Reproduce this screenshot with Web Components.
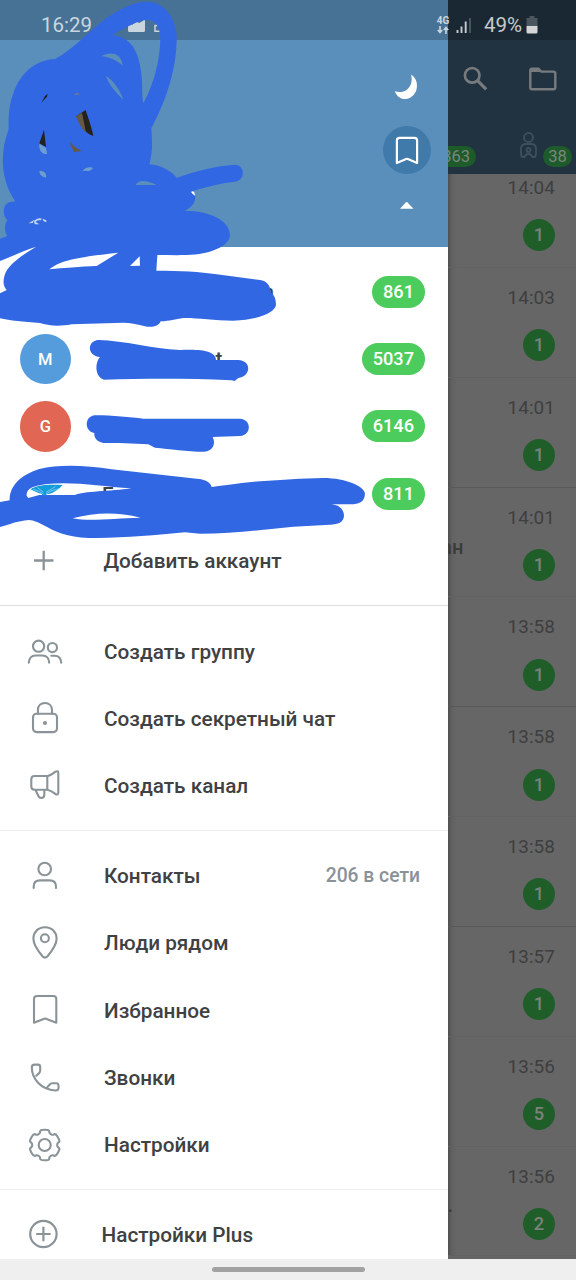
<!DOCTYPE html>
<html lang="ru">
<head>
<meta charset="utf-8">
<title>Меню</title>
<style>
html,body{margin:0;padding:0;width:576px;height:1280px;overflow:hidden;background:#efefef}
body{font-family:Roboto,"Liberation Sans",sans-serif}
</style>
</head>
<body>
<messenger-app></messenger-app>
<script>
function define(name, html) {
  customElements.define(name, class extends HTMLElement {
    constructor() {
      super();
      const t = document.createElement('template');
      t.innerHTML = typeof html === 'function' ? html(this) : html;
      this.attachShadow({ mode: 'open' }).append(t.content.cloneNode(true));
    }
  });
}

function gearPath(cx, cy) {
  const pts = [];
  for (let k = 0; k < 6; k++) {
    const a = -90 + 60 * k;
    for (const [r, d] of [[12.6, -22], [15.9, -16], [15.9, 16], [12.6, 22]]) {
      const t = (a + d) * Math.PI / 180;
      pts.push([cx + r * Math.cos(t), cy + r * Math.sin(t)]);
    }
  }
  const f = n => n.toFixed(2);
  const mix = (p, q, m) => [p[0] + (q[0] - p[0]) * m, p[1] + (q[1] - p[1]) * m];
  let d = '';
  pts.forEach((p, i) => {
    const prev = pts[(i + pts.length - 1) % pts.length], next = pts[(i + 1) % pts.length];
    const a = mix(p, prev, .42), b = mix(p, next, .42);
    d += (i ? 'L' : 'M') + f(a[0]) + ' ' + f(a[1]) + 'Q' + f(p[0]) + ' ' + f(p[1]) + ' ' + f(b[0]) + ' ' + f(b[1]);
  });
  return d + 'Z';
}

const ICONS = {
  add: '<path stroke-width="2.3" stroke-linecap="butt" d="M9 19.5H28.5M18.7 9.8V29.3"/>',
  group: '<circle cx="13.6" cy="14.2" r="5.6"/><circle cx="27.4" cy="15.6" r="4.6"/><path d="M3.8 30.6C4 26.5 6.5 23.500 10.500 23.500H17.500C21.500 23.500 24 26.500 24.200 30.600M26.300 23.700H29.500C33.700 23.700 36 26.700 36.200 30.600"/>',
  lock: '<rect x="8" y="14.700" width="24" height="18.400" rx="3.500"/><path d="M12.900 14.700V11.200C12.900 6.600 16 4 20 4S27 6.600 27 11.200V14.700"/><circle cx="20" cy="24" r="2.100" fill="#8a9398" stroke="none"/>',
  horn: '<path d="M22.300 10H9.500Q6.300 10 6.300 13.200V20.500Q6.300 23.700 9.500 23.700H22.300ZM22.300 10C25.500 9.500 28 7.500 30.300 5.700Q33.300 4.200 33.300 7V26.500Q33.300 29.500 30.300 28C28 26.300 25.500 24.200 22.300 23.700M10.500 24L13.500 30.200C14.700 32.800 19.300 32.500 19.300 29V24"/>',
  user: '<circle cx="19.700" cy="13" r="6.300"/><path d="M8.700 32V30.500C8.700 26.500 11 24.400 15 24.400H24.500C28.500 24.400 31 26.500 31 30.500V32"/>',
  pin: '<path d="M20 4.200C13 4.200 8.400 9.200 8.400 15.800C8.400 21.500 13.500 28.500 17.500 33.200Q20 36 22.500 33.200C26.500 28.500 31.600 21.500 31.600 15.800C31.600 9.200 27 4.200 20 4.200Z"/><circle cx="19.900" cy="15.200" r="4"/>',
  bookmark: '<path d="M9 31.700V8Q9 5 12 5H28.300Q31.300 5 31.300 8V31.700L21 27.700Q20.100 27.400 19.300 27.700Z"/>',
  phone: '<path d="M6.800 9.500Q6.800 6.600 9.500 6.600H13Q15.200 6.600 15.200 9V12.500Q15.200 14 14 15.200L11.300 17.800M22.500 29L24.500 26.800Q25.700 25.400 27.500 25.300L31.500 25.300Q33.500 25.400 33.500 27.500V30Q33.500 32.600 30.500 32.500C16 31.500 7 21 6.800 9.500"/>',
  gear: '<path d="' + gearPath(19.700, 20) + '"/><circle cx="19.700" cy="20" r="6"/>',
  plus: '<g stroke-width="2.2"><circle cx="18.400" cy="19" r="13.200"/><path stroke-linecap="butt" d="M11.200 19H25.600M18.400 11.800V26.200"/></g>'
};

define('menu-item', el => `
<style>
:host{display:flex;align-items:center;height:67.200px;box-sizing:border-box;padding:1.500px 28px 0 25px;color:#404142;font-size:20.750px;font-weight:500;line-height:24px;white-space:nowrap}
svg{width:40px;height:40px;flex:none;margin-right:var(--gap,39px);fill:none;stroke:#8a9398;stroke-width:2.100;stroke-linecap:round;stroke-linejoin:round}
.label{flex:1}
.note{color:#8a9297;font-size:19.300px}
</style>
<svg viewBox="0 0 40 40">${ICONS[el.getAttribute('icon')]}</svg><span class="label"><slot></slot></span><span class="note"><slot name="note"></slot></span>`);

define('count-badge', `
<style>
:host{display:flex;align-items:center;justify-content:center;box-sizing:border-box;flex:none;min-width:32px;height:32px;border-radius:16px;padding:0 10.500px;background:#4ccc5c;color:#fff;font-size:18.200px;font-weight:500;line-height:32px}
</style><slot></slot>`);

define('account-row', el => `
<style>
:host{display:flex;align-items:center;height:67.200px;box-sizing:border-box;padding:0 23.500px 0 20px}
.avatar{display:flex;align-items:center;justify-content:center;width:50.500px;height:50.500px;border-radius:50%;flex:none;background:${el.getAttribute('color') || '#fff'};color:#fff;font-size:16.500px;font-weight:500}
.name{flex:1;padding-left:var(--name-x,31.500px);padding-top:var(--name-y,0);font-size:20.600px;font-weight:500;color:#404142}
</style>
<span class="avatar">${el.getAttribute('letter') || ''}</span><span class="name"><slot></slot></span><count-badge>${el.getAttribute('count')}</count-badge>`);

define('menu-divider', `
<style>:host{display:flex;align-items:center;height:23px}i{flex:1;height:1px;background:var(--line,#ececec)}</style><i></i>`);

define('drawer-header', `
<style>
:host{display:flex;flex-direction:column;align-items:flex-end;box-sizing:border-box;height:247px;padding:63px 17px 0 0;background:#5a8fbb}
svg{display:block;width:48px;height:48px}
.saved{margin-top:15px;border-radius:50%;background:#407aaa}
.arrow{margin-top:7px}
</style>
<svg viewBox="-1.500 -.5 48 48"><path fill="#fff" d="M26.500 11.300C31.500 13.800 33.500 20 32 26C30.200 32.500 24.500 36 19 35.500C14.800 35 11.800 31.800 10.300 27.800C15 29.300 19.700 28.800 23.200 25.500C27 21.800 28 16.500 26.500 11.300Z"/></svg>
<svg class="saved" viewBox="0 0 48 48"><path fill="none" stroke="#fff" stroke-width="2.200" stroke-linejoin="round" d="M13.900 37V14.500Q13.900 11.900 16.500 11.900H31.500Q34.100 11.900 34.100 14.500V37L24.900 33Q24 32.600 23.100 33Z"/></svg>
<svg class="arrow" viewBox="0 0 48 48"><path fill="#fff" d="M17 27.800L22.700 21.400Q23.600 20.600 24.500 21.400L30.500 27.800Z"/></svg>`);

define('side-drawer', `
<style>
:host{display:flex;flex-direction:column;width:448px;height:1259px;background:#fff;overflow:hidden;flex:none}
drawer-header,menu-divider,menu-item,account-row{flex:none}
.accounts{padding-top:11.400px}
.tight{--gap:38.500px}
</style>
<drawer-header></drawer-header>
<div class="accounts">
<account-row count="861" style="--name-x:192px">n</account-row>
<account-row count="5037" letter="M" color="#549cdc" style="--name-x:145px">t</account-row>
<account-row count="6146" letter="G" color="#e16653"></account-row>
<account-row count="811" style="--name-y:3px">E</account-row>
<menu-item icon="add" class="tight">Добавить аккаунт</menu-item>
</div>
<menu-divider style="--line:#dedede"></menu-divider>
<menu-item icon="group">Создать группу</menu-item>
<menu-item icon="lock">Создать секретный чат</menu-item>
<menu-item icon="horn">Создать канал</menu-item>
<menu-divider></menu-divider>
<menu-item icon="user">Контакты<span slot="note">206 в сети</span></menu-item>
<menu-item icon="pin">Люди рядом</menu-item>
<menu-item icon="bookmark">Избранное</menu-item>
<menu-item icon="phone">Звонки</menu-item>
<menu-item icon="gear">Настройки</menu-item>
<menu-divider></menu-divider>
<menu-item icon="plus" style="--gap:36.500px">Настройки Plus</menu-item>`);

define('chat-row', el => `
<style>
:host{display:flex;flex-direction:column;align-items:stretch;gap:19.300px;height:109.850px;box-sizing:border-box;flex:none;padding:18px 21px 0 0;border-bottom:1px solid var(--line,#616161)}
.time{align-self:flex-end;font-size:18.900px;line-height:24px;color:#3d3f40;letter-spacing:.1px}
.line{display:flex;justify-content:space-between;height:32px}
.text{display:flex;justify-content:flex-end;font-size:20px;line-height:24px;font-weight:500;color:#3b3b3b;white-space:nowrap}
count-badge{background:#205e29;color:#7b827c;width:32px;padding:0}
</style>
<span class="time"><slot></slot></span><div class="line"><span class="text" style="${el.getAttribute('shift') || ''}">${el.getAttribute('text') || ''}</span><count-badge>${el.getAttribute('count')}</count-badge></div>`);

define('chat-toolbar', `
<style>
:host{display:flex;flex-direction:column;box-sizing:border-box;height:174px;padding-top:39px;background:#213240;flex:none}
.actions{display:flex;justify-content:space-between;height:78px;align-items:center;padding:0 15px 0 7px}
.tabs{display:flex;height:57px;box-sizing:border-box;padding-right:4px;align-items:center}
svg{display:block;fill:none;stroke:#777b7e}
.pill{display:flex;box-sizing:border-box;height:21px;border-radius:11px;background:#1d5b2b;color:#7b8580;font-size:16.500px;line-height:21px;margin-top:21px;flex:none}
.a{width:38px;margin-left:-10px;justify-content:flex-end;padding-right:6px}
.b{width:29px;justify-content:center;margin-left:auto}
.person{margin-left:40px;flex:none;stroke:#3d4f5c}
</style>
<div class="actions">
<svg width="40" height="40" viewBox="0 0 40 40" stroke-width="2.700"><circle cx="17.200" cy="17.300" r="7.300"/><path d="M22.600 22.700L31.200 31.300" stroke-width="3.200"/></svg>
<svg width="40" height="40" viewBox="0 0 40 40" stroke-width="2.400"><path d="M9.300 29.800V12.500Q9.300 10.800 11 10.800H17.300L20.200 13.600H32.200Q34.300 13.600 34.300 15.500V29.500Q34.300 31.300 32.500 31.300H11Q9.300 31.300 9.300 29.800Z"/><path fill="#777b7e" stroke="none" d="M9 10H18L21.500 14H9Z"/></svg>
</div>
<div class="tabs"><span class="pill a">363</span>
<svg class="person" width="24" height="32" viewBox="0 0 24 32" stroke-width="1.900"><circle cx="12.500" cy="7.500" r="4.500"/><path d="M9 27H7Q5 27 5 23V19Q5 14 10 14H15Q20 14 20 19V23Q20 27 18 27H16M9 27C9 23 16 23 16 27"/><circle cx="12.500" cy="20" r="2"/></svg>
<span class="pill b">38</span></div>`);

define('chat-pane', `
<style>
:host{display:flex;flex-direction:column;width:128px;height:1259px;background:#666;overflow:hidden;flex:none}
.list{margin-top:-16px;display:flex;flex-direction:column;background:linear-gradient(90deg,#505050,#626262 4px,#666 9px)}
chat-toolbar{z-index:1}
.strong{--line:#595959}
</style>
<chat-toolbar></chat-toolbar>
<div class="list">
<chat-row count="1">14:04</chat-row>
<chat-row count="1">14:03</chat-row>
<chat-row count="1" class="strong">14:01</chat-row>
<chat-row count="1" text="ан" shift="width:15.500px;margin-top:-14px">14:01</chat-row>
<chat-row count="1" class="strong">13:58</chat-row>
<chat-row count="1">13:58</chat-row>
<chat-row count="1" class="strong">13:58</chat-row>
<chat-row count="1">13:57</chat-row>
<chat-row count="5">13:56</chat-row>
<chat-row count="2" text="." shift="width:5px;margin-top:-15px">13:56</chat-row>
</div>`);

define('status-bar', `
<style>
:host{position:absolute;left:0;top:0;width:576px;height:39.500px;box-sizing:border-box;display:flex;align-items:center;padding:10px 38px 0 41px;background:rgba(0,0,0,.2);color:#c9d6df;font-size:20.500px;line-height:28px}
.alerts{width:70px;height:24px;margin-left:8px}
.net{margin-left:auto;display:flex;flex-direction:column;align-items:center;font-size:10px;line-height:10px;font-weight:700;width:14px}
.signal{width:16px;height:18px;margin:0 12px 0 6px}
.battery{width:12px;height:18px;margin-left:4px}
.power{color:#c6cacc}
svg{display:block;flex:none}
</style>
<span>16:29</span>
<svg class="alerts" viewBox="0 0 70 24"><path fill="#c9d6df" d="M28 9L30 9.500L32 12L36 8.500L39 10L42 8.500L45 6V17.500Q45 19 43.500 19H29.500Q28 19 28 17.500Z"/><path fill="none" stroke="#c9d6df" stroke-width="1.500" d="M59 12.500H55V18.300H60"/></svg>
<span class="net"><span>4G</span><svg width="12" height="8" viewBox="0 0 12 8"><path fill="none" stroke="#c9d6df" stroke-width="1.600" d="M3 0V6M.8 4L3 6.500L5.200 4M9 8V1.500M6.800 4L9 1.500L11.200 4"/></svg></span>
<svg class="signal" viewBox="0 0 16 18"><path stroke="#c6cacc" stroke-width="1.900" d="M1.500 17V14M5.500 17V10.500M9.700 17V5.500"/><path stroke="#4c5860" stroke-width="1.900" d="M14 17V2"/></svg>
<span class="power">49%</span>
<svg class="battery" viewBox="0 0 12 18"><path fill="#4b565e" d="M3.500 0H8.500V2H11.500V10H.5V2H3.500Z"/><path fill="#d3d5d6" d="M.5 10H11.500V16Q11.500 17.500 10 17.500H2Q.5 17.500 .5 16Z"/></svg>`);

define('marker-scribble', `
<style>
:host{position:absolute;left:0;top:0;width:448px;height:560px}
svg{display:block;fill:#3267e4}
</style>
<svg width="448" height="560" viewBox="0 0 1344 1680">
<path fill-rule="evenodd" d="M165 177C215 150 250 110 305 65C350 30 400 5 440 5C490 5 522 45 530 105C532 200 500 300 454 385C456 420 460 450 448 493C480 495 510 510 530 533C580 517 640 497 705 494C735 495 738 540 705 545C660 550 620 560 580 572C590 590 590 615 554 632C630 633 688 660 690 705C688 740 630 763 560 765C530 766 500 765 472 765L469 812C540 812 600 815 650 823L780 840C800 842 812 858 812 876C822 885 828 895 828 915C826 935 780 960 700 962C640 962 590 953 550 954C525 957 510 963 482 964C475 982 450 983 432 978C410 972 390 968 370 968L215 973C170 982 140 975 120 969C70 965 30 962 0 955V880L20 870C10 860 8 845 14 825C24 795 60 770 108 740C65 754 30 772 0 783V716L22 708C14 700 12 675 22 660C10 650 8 630 16 616C22 608 32 605 46 604C0 540 0 455 26 388C24 345 28 310 40 280C60 220 105 180 165 177ZM338 104C385 78 420 60 440 60C465 58 480 80 481 115C480 185 460 255 430 310C425 290 428 250 424 220C415 145 390 113 338 104Z"/>
<path fill="#5a8fbb" d="M304 168C340 150 365 165 368 197C350 180 330 172 304 168ZM317 227C340 240 360 270 370 299C345 275 328 254 317 227ZM407 555C415 538 440 540 470 555Z"/>
<path fill="#6d9fce" d="M118 512C135 514 140 520 138 533C125 530 118 522 118 512ZM248 512C258 500 278 500 278 506L268 513ZM118 431L138 443L141 462C127 463 116 452 118 431Z"/>
<path fill="#fff" d="M148 808C180 783 220 773 355 758L290 798C240 800 190 804 148 808ZM390 798L419 769L420 797ZM573 576C580 570 585 578 585 587L579 583Z"/>
<path fill="#c5d8e8" d="M86 670L103 659L98 669ZM102 662Q116 652 126 656L122 661Q108 659 108 667L118 673H104ZM128 656L139 661V667L130 663Z"/>
<path fill="#24221b" d="M124 308L135 288L143 281L141 290ZM118 430L132 389L138 441ZM228 349L257 330C263 350 275 380 280 408C250 398 240 370 228 349Z"/>
<path fill="#65594a" d="M228 349L246 338L258 398C245 388 236 370 228 349ZM208 425C220 435 230 447 246 452L222 457Z"/>
<path fill="#737b85" d="M221 286Q230 273 239 283Z"/>
<g transform="translate(0 720)">
<path d="M295 300C375 302 455 326 540 330C600 326 648 332 648 360H715C755 362 755 408 715 414L704 423L695 421C550 414 430 416 312 419C286 412 283 370 300 351C260 348 261 302 295 300Z"/>
</g>
<g transform="translate(0 1140)">
<path d="M285 106C340 106 390 112 430 116H720C755 118 756 165 720 168L638 171C648 190 640 214 612 215C560 215 510 207 465 203L445 193L358 189H310C290 184 282 175 283 159C252 154 253 108 285 106Z"/>
<path fill-rule="evenodd" d="M0 366L29 361C28 320 60 285 118 267C180 252 260 257 335 268L590 296C618 298 632 308 635 321C700 314 740 306 780 304C850 300 900 295 970 294C1040 294 1095 320 1095 342C1093 365 1080 373 1050 373H988C1020 373 1032 390 1032 408C1030 428 1015 433 990 434L880 440C790 449 700 461 600 461L555 457C470 465 380 473 290 474C220 474 180 463 140 440C120 430 100 420 87 420C50 423 30 433 0 441ZM80 347C78 325 100 318 140 312C230 304 300 320 395 325C330 334 250 334 225 345H118L85 354ZM218 415C290 396 350 396 422 413C340 415 270 425 218 415Z"/>
<path fill="#159bd9" d="M92 328C105 318 130 312 188 315C170 335 152 342 139 343V346H126V342C112 339 100 333 92 328Z"/>
<path fill="none" stroke="#a3ddf5" stroke-width="2" d="M112 323L130 336M166 320L138 337M100 328Q123 334 130 342M178 326Q150 331 138 342"/>
</g>
</svg>`);

define('nav-handle', `
<style>:host{display:flex;justify-content:center;align-items:center;height:21px;background:#efefef}i{width:153px;height:5px;border-radius:3px;background:#a2a2a2}</style><i></i>`);

define('messenger-app', `
<style>
:host{display:block;position:relative;width:576px;height:1280px;overflow:hidden;font-family:Roboto,"Liberation Sans",sans-serif}
main{display:flex;height:1259px;isolation:isolate}
</style>
<main><side-drawer></side-drawer><chat-pane></chat-pane></main>
<nav-handle></nav-handle>
<status-bar></status-bar>
<marker-scribble></marker-scribble>`);
</script>
</body>
</html>
